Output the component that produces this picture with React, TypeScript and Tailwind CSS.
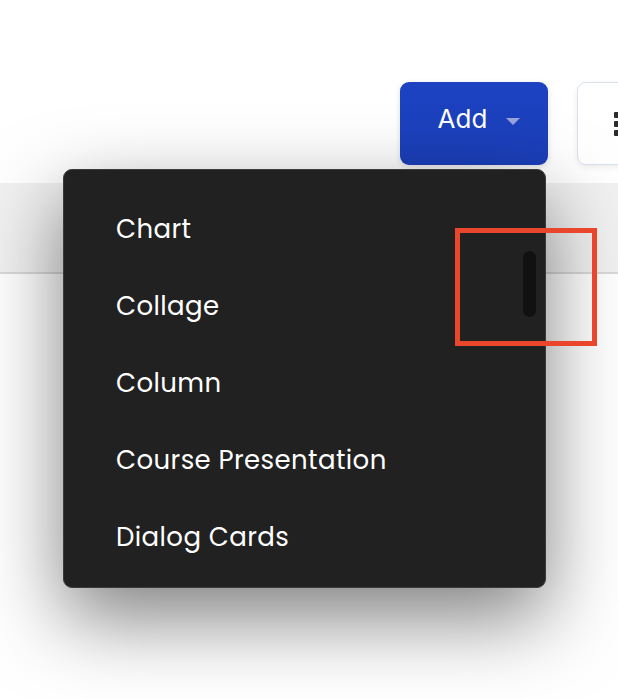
const items = ['Chart', 'Collage', 'Column', 'Course Presentation', 'Dialog Cards'];

function GripIcon() {
  return (
    <svg width="14" height="24" viewBox="0 0 14 24" className="shrink-0">
      {[0, 1].map((c) =>
        [0, 1, 2].map((r) => (
          <rect key={`${c}-${r}`} x={c * 8} y={r * 9} width="6" height="6" rx="1" fill="#2b2b2b" />
        ))
      )}
    </svg>
  );
}

export default function App() {
  return (
    <div className="relative h-[698px] w-[618px] overflow-hidden bg-white" style={{ fontFamily: 'Inter, "Liberation Sans", sans-serif' }}>
      <div className="flex h-[183px] items-start gap-[29px] pl-[400px] pt-[82px]">
        <button className="flex h-[83px] w-[148px] shrink-0 items-center justify-center gap-[19px] rounded-[9px] bg-gradient-to-b from-[#1d42c2] to-[#1b3fb9] pb-[10px] pl-[10px] text-[26px] font-normal text-white shadow-[0_2px_6px_rgba(0,0,0,0.12)]">
          Add
          <svg width="14" height="8" viewBox="0 0 14 8" className="mt-[7px]">
            <path d="M0 0 L14 0 L7 7 Z" fill="#98a4da" />
          </svg>
        </button>
        <button className="flex h-[83px] w-[90px] shrink-0 items-center rounded-[9px] border border-[#dbe1ec] bg-white pl-[36px] shadow-[0_2px_6px_rgba(0,0,0,0.08)]">
          <GripIcon />
        </button>
      </div>

      <div className="h-[91px] border-b-2 border-[#d9d9d9] bg-[#f1f1f1]" />
      <div className="h-[422px] bg-white" />

      <div className="absolute left-[63px] top-[169px] w-[483px] rounded-[9px] border border-[#3b3b3b] bg-[#212121] pb-[11px] pt-[21px] shadow-[0_30px_80px_rgba(0,0,0,0.5)]">
        <ul className="flex flex-col" style={{ fontFamily: 'Poppins, "Open Sans", "Noto Sans", sans-serif' }}>
          {items.map((item) => (
            <li key={item} className="flex h-[77px] items-center pl-[52px] text-[26px] tracking-[0.4px] text-white">
              {item}
            </li>
          ))}
        </ul>
        <div className="absolute right-[9px] top-[81px] h-[66px] w-[13px] rounded-full bg-[#111111]" />
      </div>

      <div className="absolute left-[455px] top-[228px] h-[118px] w-[142px] border-[5px] border-[#e9462b]" />
    </div>
  );
}
